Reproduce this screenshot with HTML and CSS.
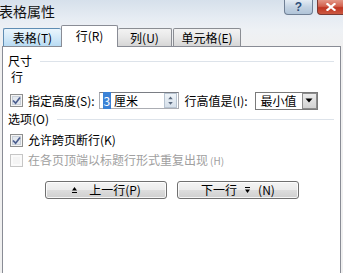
FILE: index.html
```html
<!DOCTYPE html>
<html lang="zh-CN">
<head>
<meta charset="utf-8">
<title>表格属性</title>
<link rel="stylesheet" href="styles.css">
</head>
<body>
<div class="window">
  <div class="titlebar">
    <span class="title">表格属性</span>
    <div class="ctrls">
      <div class="cbtn help">?</div>
      <div class="cbtn close">
        <svg width="10" height="8" viewBox="0 0 10 8"><path d="M1.5 1 L8.5 7 M8.5 1 L1.5 7" stroke="#ffffff" stroke-width="2.2" stroke-linecap="square"/></svg>
      </div>
    </div>
  </div>

  <div class="tabs">
    <span class="tab hover">表格(T)</span>
    <span class="tab active">行(R)</span>
    <span class="tab narrow">列(U)</span>
    <span class="tab wide">单元格(E)</span>
  </div>

  <div class="panel">
    <div class="group"><span>尺寸</span><span class="rule"></span></div>
    <div class="sub">行</div>
    <div class="row">
      <span class="cb"><svg width="9" height="9" viewBox="0 0 9 9"><path d="M1 4.5 L3.6 7.2 L8 1.5" stroke="#4b5e8f" stroke-width="1.7" fill="none"/></svg></span>
      <span class="lbl">指定高度(S):</span>
      <span class="input">
        <span class="val"><span class="sel">3</span> 厘米</span>
        <span class="spin">
          <svg width="12" height="15" viewBox="0 0 12 15"><path d="M6 3 L8.5 6 L3.5 6 Z M6 12 L8.5 9 L3.5 9 Z" fill="#5b6b80"/></svg>
        </span>
      </span>
      <span class="lbl lbl2">行高值是(I):</span>
      <span class="select">
        <span class="sval">最小值</span>
        <span class="drop"><svg width="8" height="5" viewBox="0 0 8 5"><path d="M0.5 0.5 L7.5 0.5 L4 4.5 Z" fill="#000"/></svg></span>
      </span>
    </div>
    <div class="group g2"><span>选项(O)</span><span class="rule"></span></div>
    <div class="chk">
      <span class="cb"><svg width="9" height="9" viewBox="0 0 9 9"><path d="M1 4.5 L3.6 7.2 L8 1.5" stroke="#4b5e8f" stroke-width="1.7" fill="none"/></svg></span>
      <span class="lbl">允许跨页断行(K)</span>
    </div>
    <div class="chk disabled">
      <span class="cb"></span>
      <span class="lbl">在各页顶端以标题行形式重复出现<small>(H)</small></span>
    </div>
    <div class="btns">
      <span class="btn">
        <svg width="7" height="8" viewBox="0 0 7 8"><path d="M3.5 1 L6 4.5 L1 4.5 Z" fill="#000"/><rect x="1" y="6" width="5" height="1" fill="#000"/></svg>
        <span class="btxt">上一行(P)</span>
      </span>
      <span class="btn">
        <span class="btxt">下一行</span>
        <svg width="7" height="8" viewBox="0 0 7 8"><rect x="1" y="1" width="5" height="1" fill="#000"/><path d="M3.5 7 L6 3.5 L1 3.5 Z" fill="#000"/></svg>
        <span class="btxt">(N)</span>
      </span>
    </div>
  </div>
</div>
</body>
</html>
```

FILE: styles.css
```css
html, body {
  margin: 0;
  padding: 0;
}
body {
  width: 343px;
  height: 273px;
  overflow: hidden;
  background: #f0f0f0;
  font-family: "Noto Sans CJK SC", "Liberation Sans", sans-serif;
  font-size: 12px;
  color: #000;
}
.window {
  width: 343px;
  height: 273px;
  display: flex;
  flex-direction: column;
  background: linear-gradient(#d6e0eb 0px, #e6ecf3 18px, #eef1f5 30px, #f0f0f0 46px);
}
.titlebar {
  height: 25px;
  display: flex;
  align-items: flex-start;
  position: relative;
  z-index: 5;
}
.title {
  font-size: 14px;
  line-height: 16px;
  margin-top: 3px;
  margin-left: -1px;
  color: #111;
  flex: 1;
}
.ctrls {
  display: flex;
  flex: none;
  gap: 4px;
}
.cbtn {
  flex: none;
  height: 15px;
  box-sizing: border-box;
  border-style: solid;
  border-width: 0 1px 1px 1px;
  border-radius: 0 0 4px 4px;
  display: flex;
  align-items: center;
  justify-content: center;
}
.help {
  width: 29px;
  border-color: #6f7f94;
  background-color: #c3d2e2;
  background-image: linear-gradient(#e4ecf4, #c3d2e2 50%, #b0c4d8);
  color: #2d4f7a;
  font-family: "Liberation Sans", sans-serif;
  font-weight: bold;
  font-size: 12px;
  line-height: 13px;
}
.close {
  width: 26px;
  border-color: #7a3a33;
  border-width: 0 0 1px 1px;
  border-radius: 0 0 0 4px;
  background-color: #c8432f;
  background-image: linear-gradient(#e39686, #d2624f 45%, #bf3522 55%, #cc5a42);
}
.tabs {
  height: 21px;
  display: flex;
  align-items: flex-end;
  padding-left: 3px;
  position: relative;
  z-index: 2;
}
.tab {
  height: 18px;
  box-sizing: border-box;
  border: 1px solid #8a8d93;
  border-bottom: none;
  display: flex;
  align-items: center;
  justify-content: center;
  line-height: 16px;
  background: linear-gradient(#f3f3f3, #e7e7e7 50%, #d6d6d6);
  border-radius: 2px 2px 0 0;
}
.tab.hover {
  width: 58px;
  border-right: none;
  background: linear-gradient(#eaf5fc, #d3e9f8 50%, #b8dbf3);
  border-color: #5f8db3;
}
.tab.active {
  width: 57px;
  height: 22px;
  margin-bottom: -1px;
  background: #fff;
  border-color: #898c95;
  padding-bottom: 2px;
}
.tab.narrow {
  width: 54px;
  border-left: none;
}
.tab.wide {
  width: 68px;
  margin-left: 1px;
}
.panel {
  flex: 1;
  margin-left: 2px;
  width: 339px;
  box-sizing: border-box;
  border: 1px solid #898c95;
  border-bottom: none;
  background: #fff;
  padding: 7px 6px 0 5px;
  display: flex;
  flex-direction: column;
}
.group {
  height: 14px;
  display: flex;
  align-items: center;
  line-height: 14px;
}
.group .rule {
  flex: 1;
  height: 1px;
  background: #dde3ea;
  margin-left: 8px;
  margin-top: 1px;
}
.g2 {
  margin-top: 2px;
}
.sub {
  height: 14px;
  line-height: 14px;
  margin-top: 2px;
  padding-left: 3px;
}
.row {
  display: flex;
  align-items: center;
  height: 19px;
  margin-top: 7px;
}
.cb {
  width: 13px;
  height: 13px;
  box-sizing: border-box;
  border: 1px solid #8e8f8f;
  background: #fff;
  box-shadow: inset 0 0 0 1px #f4f4f4, inset 0 0 0 2px #c9d0d9, inset 0 0 0 6px #e3e8ee;
  display: flex;
  align-items: center;
  justify-content: center;
  margin-left: 2px;
  flex: none;
}
.lbl {
  margin-left: 5px;
  white-space: nowrap;
  line-height: 14px;
}
.input {
  margin-left: 4px;
  width: 80px;
  height: 17px;
  box-sizing: border-box;
  border: 1px solid #abadb3;
  border-top-color: #7a7d84;
  display: flex;
  align-items: center;
  justify-content: space-between;
  padding-left: 3px;
}
.val {
  line-height: 14px;
}
.sel {
  background: #3b82d6;
  color: #fff;
  padding: 0 1px;
}
.spin {
  width: 13px;
  height: 15px;
  box-sizing: border-box;
  border: 1px solid #b7c3d0;
  background: linear-gradient(#eef3f8, #d6e0ea);
  display: flex;
  align-items: center;
  justify-content: center;
  margin-right: 1px;
}
.lbl2 {
  margin-left: 6px;
}
.select {
  margin-left: 7px;
  width: 63px;
  height: 18px;
  box-sizing: border-box;
  border: 1px solid #7a7a7a;
  display: flex;
  align-items: center;
  justify-content: space-between;
  padding-left: 5px;
}
.sval {
  line-height: 14px;
}
.drop {
  width: 15px;
  height: 16px;
  box-sizing: border-box;
  border: 1px solid #8c8c8c;
  background: linear-gradient(#ececec, #d2d2d2);
  display: flex;
  align-items: center;
  justify-content: center;
}
.chk {
  display: flex;
  align-items: center;
  height: 14px;
  margin-top: 7px;
}
.chk + .chk {
  margin-top: 6px;
}
.disabled .cb {
  border-color: #c6c6c6;
  box-shadow: inset 0 0 0 2px #fafafa;
  background: #f4f4f4;
}
.disabled .lbl {
  color: #a0a0a0;
}
.disabled small {
  font-size: 10px;
  margin-left: 2px;
}
.btns {
  display: flex;
  margin-top: 14px;
  padding-left: 37px;
  gap: 10px;
}
.btn {
  width: 122px;
  height: 18px;
  box-sizing: border-box;
  border: 1px solid #707070;
  border-radius: 3px;
  background: linear-gradient(#f4f4f4, #ebebeb 50%, #dddddd 51%, #cfcfcf);
  box-shadow: inset 0 0 0 1px rgba(255,255,255,0.8);
  display: flex;
  align-items: center;
  justify-content: center;
  gap: 7px;
  line-height: 14px;
}
.btn svg:first-child {
  margin-right: 4px;
}
```
